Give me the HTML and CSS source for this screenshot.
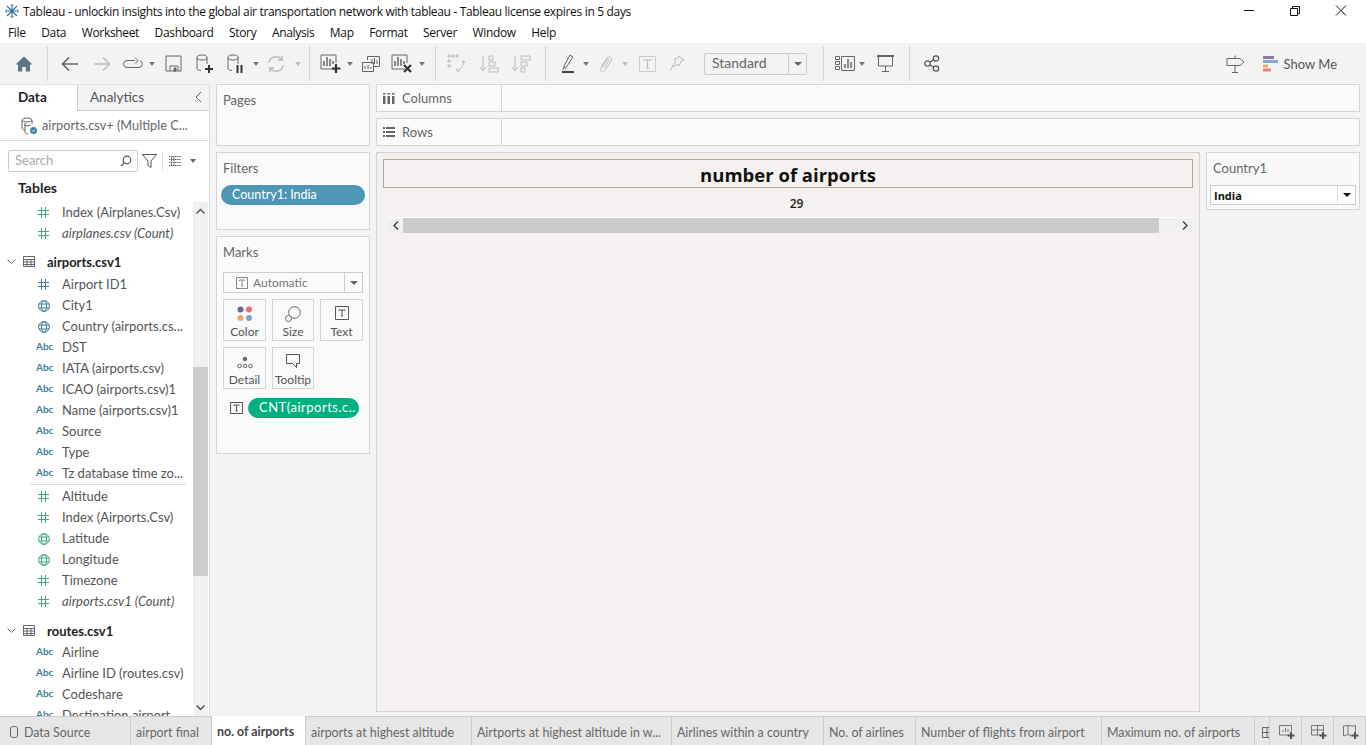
FILE: index.html
```html
<!DOCTYPE html>
<html>
<head>
	<meta charset="utf-8">
	<title>Tableau</title>
	<link rel="stylesheet" href="styles.css">
</head>
<body>
	<!-- title bar -->
	<div class="titlebar">
		<svg class="logo" width="16" height="16" viewBox="0 0 16 16" fill="none" stroke="#2d6f9e" stroke-width="1.100">
			<path d="M8 1v14M1 8h14M3 3l10 10M13 3L3 13"/>
			<path d="M6 2.500h4M6 13.500h4M2.500 6v4M13.500 6v4" stroke="#7fa8c4"/>
		</svg>
		<span class="titletext">Tableau - unlockin insights into the global air transportation network with tableau - Tableau license expires in 5 days</span>
		<div class="winbtns">
			<div class="winbtn"><svg width="12" height="12" viewBox="0 0 12 12" fill="none" stroke="#111"><path d="M1 5.500h10"/></svg></div>
			<div class="winbtn"><svg width="12" height="12" viewBox="0 0 12 12" fill="none" stroke="#111"><path d="M1.500 3.500h7v7h-7zM3.500 3.500v-2h7v7h-2"/></svg></div>
			<div class="winbtn"><svg width="12" height="12" viewBox="0 0 12 12" fill="none" stroke="#111"><path d="M1 .5l10 10M11 .5l-10 10"/></svg></div>
		</div>
	</div>
	<div class="menubar">
		<span>File</span><span>Data</span><span>Worksheet</span><span>Dashboard</span><span>Story</span><span>Analysis</span><span>Map</span><span>Format</span><span>Server</span><span>Window</span><span>Help</span>
	</div>

	<!-- toolbar -->
	<div class="toolbar">
		<div class="group g-home">
			<svg width="18" height="18" viewBox="0 0 18 18" fill="#5f7388"><path d="M9 1.500L.5 9.500h2.500v7h4.200v-4.500h3.600v4.500h4.200v-7h2.500z"/></svg>
		</div>
		<div class="group g-hist">
			<div class="cell w28"><svg width="18" height="16" viewBox="0 0 18 16" fill="none" stroke="#666" stroke-width="1.600"><path d="M17 8H2M8 1.500L1.500 8 8 14.500"/></svg></div>
			<div class="cell w36"><svg width="18" height="16" viewBox="0 0 18 16" fill="none" stroke="#bbb" stroke-width="1.600"><path d="M1 8h15M10 1.500L16.500 8 10 14.500"/></svg></div>
			<div class="cell w26"><svg width="20" height="14" viewBox="0 0 20 14" fill="none" stroke="#666"><path d="M12 3.500H4a3.500 3.500 0 0 0 0 7h12a3.500 3.500 0 0 0 1-6.800"/><path d="M12 .5l3 3-3 3"/></svg></div>
			<div class="drop"></div>
			<div class="cell w30"><svg width="17" height="17" viewBox="0 0 17 17" fill="none" stroke="#666"><path d="M1 1h15v15H1zM5 16v-5h8v5"/><path d="M9 13h2v3H9z" fill="#666"/></svg></div>
			<div class="cell w34"><svg width="20" height="20" viewBox="0 0 20 20" fill="none" stroke="#666"><ellipse cx="7" cy="3.500" rx="5" ry="2.500"/><path d="M2 3.500v11c0 1 1.500 2 4 2M12 3.500V10"/><path d="M14 11v8M10 15h8" stroke="#333" stroke-width="2"/></svg></div>
			<div class="cell w28"><svg width="20" height="20" viewBox="0 0 20 20" fill="none" stroke="#666"><ellipse cx="7" cy="3.500" rx="5" ry="2.500"/><path d="M2 3.500v11c0 1 1.500 2 4 2M12 3.500V10"/><path d="M11.500 11v8M15.500 11v8" stroke="#333" stroke-width="2"/></svg></div>
			<div class="drop"></div>
			<div class="cell w28"><svg width="18" height="18" viewBox="0 0 18 18" fill="none" stroke="#bbb" stroke-width="1.400"><path d="M2 8a7 7 0 0 1 12.500-3.500M16 10a7 7 0 0 1-12.500 3.500M15 1v4h-4M3 17v-4h4"/></svg></div>
			<div class="drop off pushed"></div>
		</div>
		<div class="group g-sheet">
			<div class="cell w26"><svg width="22" height="20" viewBox="0 0 22 20" fill="none" stroke="#666"><path d="M15 15H1V1h15v8"/><path d="M4 12V7M7 12V3M10 12V5M13 10V7" stroke-width="1.500"/><path d="M16 10v9M12 14.500h8.500" stroke="#333" stroke-width="2.200"/></svg></div>
			<div class="drop"></div>
			<div class="cell w30"><svg width="18" height="16" viewBox="0 0 18 16" fill="none" stroke="#666"><path d="M5.500 4V.5h12v10H12"/><path d="M.5 6.500h11v9H.5z" fill="#f3f3f3"/><path d="M10 8V3M12.500 8V2M15 8V4M3 13v-3M6 13v-4M9 13v-2"/></svg></div>
			<div class="cell w32"><svg width="22" height="20" viewBox="0 0 22 20" fill="none" stroke="#666"><path d="M14 15H1V1h15v8"/><path d="M4 12V7M7 12V3M10 12V5M13 10V7" stroke-width="1.500"/><path d="M13 11l7 7M20 11l-7 7" stroke="#333" stroke-width="2.200"/></svg></div>
			<div class="drop small"></div>
		</div>
		<div class="group g-sort">
			<div class="cell w26"><svg width="20" height="20" viewBox="0 0 20 20" fill="none" stroke="#bbb"><path d="M1 1h2v2H1zM5 1h2v2H5zM9 1h2v2H9zM1 6h2v2H1zM1 11h2v2H1zM16 7c1 4-1 8-6 10M10 14v3h3M15 9l1.500-2.500L18 9"/></svg></div>
			<div class="cell w38"><svg width="20" height="18" viewBox="0 0 20 18" fill="none" stroke="#bbb"><path d="M4 1v14M1 12l3 4 3-4"/><path d="M10 1h4v4h-4zM10 7h6v4h-6zM10 13h9v4h-9z"/></svg></div>
			<div class="cell w26"><svg width="20" height="18" viewBox="0 0 20 18" fill="none" stroke="#bbb"><path d="M4 1v14M1 12l3 4 3-4"/><path d="M10 1h9v4h-9zM10 7h6v4h-6zM10 13h4v4h-4z"/></svg></div>
		</div>
		<div class="group g-view">
			<div class="cell w24"><svg width="14" height="19" viewBox="0 0 14 19" fill="none" stroke="#666"><path d="M3 12l1.500 2.500L12 3 9 1zM3 12l-1 3.500"/><path d="M1 18h12" stroke="#444" stroke-width="2"/></svg></div>
			<div class="drop"></div>
			<div class="cell w27"><svg width="14" height="18" viewBox="0 0 14 18" fill="none" stroke="#bbb"><path d="M2 12l6-9c1.500-2.500 6-.5 4.500 2.500l-7 10.500c-1.500 2-5 0-3.500-2.500l6-9c.8-1 2.500-.2 1.800 1L5 13"/></svg></div>
			<div class="drop off"></div>
			<div class="cell w32"><svg width="17" height="16" viewBox="0 0 17 16" fill="none" stroke="#bbb"><path d="M.5.5h16v15H.5z" stroke-dasharray="2 1"/><path d="M5 5V4h7v1M8.500 4v8M7 12h3"/></svg></div>
			<div class="cell w28"><svg width="16" height="17" viewBox="0 0 16 17" fill="none" stroke="#bbb"><path d="M10 1l5 4-3 1-2 5-1.500-1.500L3 12l4-6-2-2 4-1zM3 12l-2 4"/></svg></div>
			<div class="fitbox"><span class="fittext">Standard</span><span class="fitarrow"><i class="tri"></i></span></div>
		</div>
		<div class="group g-show">
			<div class="cell w26"><svg width="20" height="15" viewBox="0 0 20 15" fill="none" stroke="#666"><path d="M.5.5h4v3h-4zM.5 5.500h4v3h-4zM.5 10.500h4v3h-4zM6.500.5h13v14h-13z"/><path d="M10 12V8M13 12V3M16 12V6" stroke-width="1.500"/></svg></div>
			<div class="drop small"></div>
			<div class="cell w38"><svg width="17" height="17" viewBox="0 0 17 17" fill="none" stroke="#666"><path d="M0 1h17" stroke-width="2"/><path d="M1.500 1v10h14V1M8.500 11v5M5 16.500h7"/></svg></div>
		</div>
		<div class="group g-share">
			<div class="cell w28"><svg width="16" height="17" viewBox="0 0 16 17" fill="none" stroke="#555" stroke-width="1.200"><circle cx="3.500" cy="8.500" r="2.700"/><circle cx="12" cy="3.500" r="2.700"/><circle cx="12" cy="13.500" r="2.700"/><path d="M6 7l3.700-2.200M6 10l3.700 2.200"/></svg></div>
		</div>
		<div class="tb-right">
			<svg width="19" height="18" viewBox="0 0 19 18" fill="none" stroke="#666"><path d="M1 3.500h13l4 3.500-4 3.500H1zM9 .5v3M9 10.500v7M6 17.500h6"/></svg>
			<div class="showme">
				<svg width="15" height="16" viewBox="0 0 15 16"><path d="M0 0h11v3H0z" fill="#8a76a0"/><path d="M0 4h15v3H0z" fill="#86a6cf"/><path d="M0 8.500h5v3H0z" fill="#f2a76f"/><path d="M0 12.500h8v3H0z" fill="#f47a80"/></svg>
				<span>Show Me</span>
			</div>
		</div>
	</div>

	<div class="main">
		<!-- data pane -->
		<div class="datapane">
			<div class="panetabs">
				<div class="panetab on">Data</div>
				<div class="panetab">Analytics<svg class="collapse" width="8" height="12" viewBox="0 0 8 12" fill="none" stroke="#666"><path d="M7 1L2 6l5 5"/></svg></div>
			</div>
			<div class="dsrow">
				<svg width="18" height="18" viewBox="0 0 18 18" fill="none" stroke="#666"><ellipse cx="7" cy="3" rx="5" ry="2"/><path d="M2 3v8c0 1 1 2 3 2M12 3v4M4 8c2 1 5 1 7 0M5 6v9c0 1 1 2 3 2"/><circle cx="13.500" cy="13.500" r="3.500" fill="#3d84a8" stroke="none"/><path d="M12 13.500l1 1 2-2" stroke="#fff"/></svg>
				<span>airports.csv+ (Multiple C...</span>
			</div>
			<div class="searchrow">
				<div class="searchbox">
					<span>Search</span>
					<svg width="12" height="12" viewBox="0 0 12 12" fill="none" stroke="#555" stroke-width="1.200"><circle cx="7" cy="5" r="3.800"/><path d="M4.300 7.700L1 11"/></svg>
				</div>
				<svg class="funnel" width="15" height="14" viewBox="0 0 15 14" fill="none" stroke="#555"><path d="M.5.5h14L9 7v6.500L6 11.500V7z"/></svg>
				<div class="sr-sep"></div>
				<svg class="gridicon" width="12" height="10" viewBox="0 0 12 10" fill="none" stroke="#666"><path d="M0 .5h12M0 3.500h12M0 6.500h12M0 9.500h12M2.500 0v10M5 0v10" stroke-dasharray="1.500 .5"/></svg>
				<i class="tri gridtri"></i>
			</div>
			<div class="tables-h">Tables</div>
			<div class="listwrap">
				<div class="fieldlist">
					<div class="row"><svg class="hash green" width="11" height="11" viewBox="0 0 11 11"><path d="M3.500 0v11M7.500 0v11M0 3.500h11M0 7.500h11"/></svg>Index (Airplanes.Csv)</div>
					<div class="row it"><svg class="hash green" width="11" height="11" viewBox="0 0 11 11"><path d="M3.500 0v11M7.500 0v11M0 3.500h11M0 7.500h11"/></svg>airplanes.csv (Count)</div>

					<div class="tbl">
						<svg class="chev" width="9" height="6" viewBox="0 0 9 6" fill="none" stroke="#777"><path d="M.5.5l4 4 4-4"/></svg>
						<svg class="tblic" width="12" height="11" viewBox="0 0 12 11" fill="none" stroke="#666"><path d="M.5.5h11v10H.5zM.5 3.500h11M.5 6h11M.5 8.500h11M4 3.500v7M8 3.500v7"/></svg>
						airports.csv1
					</div>
					<div class="row"><svg class="hash blue" width="11" height="11" viewBox="0 0 11 11"><path d="M3.500 0v11M7.500 0v11M0 3.500h11M0 7.500h11"/></svg>Airport ID1</div>
					<div class="row"><svg class="globe" width="12" height="12" viewBox="0 0 12 12" fill="none" stroke="#3d7f9c"><circle cx="6" cy="6" r="5.400"/><ellipse cx="6" cy="6" rx="2.500" ry="5.400"/><path d="M1 4h10M1 8h10"/></svg>City1</div>
					<div class="row"><svg class="globe" width="12" height="12" viewBox="0 0 12 12" fill="none" stroke="#3d7f9c"><circle cx="6" cy="6" r="5.400"/><ellipse cx="6" cy="6" rx="2.500" ry="5.400"/><path d="M1 4h10M1 8h10"/></svg>Country (airports.cs...</div>
					<div class="row"><span class="abc">Abc</span>DST</div>
					<div class="row"><span class="abc">Abc</span>IATA (airports.csv)</div>
					<div class="row"><span class="abc">Abc</span>ICAO (airports.csv)1</div>
					<div class="row"><span class="abc">Abc</span>Name (airports.csv)1</div>
					<div class="row"><span class="abc">Abc</span>Source</div>
					<div class="row"><span class="abc">Abc</span>Type</div>
					<div class="row"><span class="abc">Abc</span>Tz database time zo...</div>
					<div class="rule"></div>
					<div class="row"><svg class="hash green" width="11" height="11" viewBox="0 0 11 11"><path d="M3.500 0v11M7.500 0v11M0 3.500h11M0 7.500h11"/></svg>Altitude</div>
					<div class="row"><svg class="hash green" width="11" height="11" viewBox="0 0 11 11"><path d="M3.500 0v11M7.500 0v11M0 3.500h11M0 7.500h11"/></svg>Index (Airports.Csv)</div>
					<div class="row"><svg class="globe" width="12" height="12" viewBox="0 0 12 12" fill="none" stroke="#3fa67f"><circle cx="6" cy="6" r="5.400"/><ellipse cx="6" cy="6" rx="2.500" ry="5.400"/><path d="M1 4h10M1 8h10"/></svg>Latitude</div>
					<div class="row"><svg class="globe" width="12" height="12" viewBox="0 0 12 12" fill="none" stroke="#3fa67f"><circle cx="6" cy="6" r="5.400"/><ellipse cx="6" cy="6" rx="2.500" ry="5.400"/><path d="M1 4h10M1 8h10"/></svg>Longitude</div>
					<div class="row"><svg class="hash green" width="11" height="11" viewBox="0 0 11 11"><path d="M3.500 0v11M7.500 0v11M0 3.500h11M0 7.500h11"/></svg>Timezone</div>
					<div class="row it"><svg class="hash green" width="11" height="11" viewBox="0 0 11 11"><path d="M3.500 0v11M7.500 0v11M0 3.500h11M0 7.500h11"/></svg>airports.csv1 (Count)</div>

					<div class="tbl last">
						<svg class="chev" width="9" height="6" viewBox="0 0 9 6" fill="none" stroke="#777"><path d="M.5.5l4 4 4-4"/></svg>
						<svg class="tblic" width="12" height="11" viewBox="0 0 12 11" fill="none" stroke="#666"><path d="M.5.5h11v10H.5zM.5 3.500h11M.5 6h11M.5 8.500h11M4 3.500v7M8 3.500v7"/></svg>
						routes.csv1
					</div>
					<div class="row"><span class="abc">Abc</span>Airline</div>
					<div class="row"><span class="abc">Abc</span>Airline ID (routes.csv)</div>
					<div class="row"><span class="abc">Abc</span>Codeshare</div>
					<div class="row"><span class="abc">Abc</span>Destination airport</div>
				</div>
				<div class="vscroll">
					<div class="vs-btn"><svg width="9" height="6" viewBox="0 0 9 6" fill="none" stroke="#555" stroke-width="1.500"><path d="M.5 5.500l4-4 4 4"/></svg></div>
					<div class="vs-track"><div class="vs-thumb"></div></div>
					<div class="vs-btn"><svg width="9" height="6" viewBox="0 0 9 6" fill="none" stroke="#555" stroke-width="1.500"><path d="M.5.5l4 4 4-4"/></svg></div>
				</div>
			</div>
		</div>

		<!-- shelves -->
		<div class="cards">
			<div class="card pages"><div class="cardtitle">Pages</div></div>
			<div class="card filters">
				<div class="cardtitle">Filters</div>
				<div class="pill bluepill">Country1: India</div>
			</div>
			<div class="card marks">
				<div class="cardtitle">Marks</div>
				<div class="marktype">
					<svg width="12" height="12" viewBox="0 0 12 12" fill="none" stroke="#888"><path d="M.5.5h11v11H.5z"/><path d="M3.500 4V3h5v1M6 3v6M5 9h2"/></svg>
					<span>Automatic</span>
					<span class="mt-arrow"><i class="tri"></i></span>
				</div>
				<div class="markgrid">
					<div class="markbtn"><svg width="16" height="16" viewBox="0 0 16 16"><circle cx="3.500" cy="3.500" r="3" fill="#7b5f92"/><circle cx="12" cy="3.500" r="3" fill="#ef6b75"/><circle cx="3.500" cy="12" r="3" fill="#f0a26a"/><circle cx="12" cy="12" r="3" fill="#7ea3cc"/></svg><span>Color</span></div>
					<div class="markbtn"><svg width="16" height="16" viewBox="0 0 16 16" fill="none" stroke="#666"><circle cx="9.500" cy="6.500" r="5.800"/><circle cx="3.500" cy="12.500" r="3" fill="#fafafa"/></svg><span>Size</span></div>
					<div class="markbtn"><svg width="14" height="14" viewBox="0 0 14 14" fill="none" stroke="#555"><path d="M.5.5h13v13H.5z"/><path d="M4 5V4h6v1M7 4v6M6 10h2"/></svg><span>Text</span></div>
					<div class="markbtn"><svg width="16" height="16" viewBox="0 0 16 16" fill="none" stroke="#666"><circle cx="8" cy="5" r="1.800" fill="#666"/><circle cx="2.500" cy="12" r="1.800"/><circle cx="8" cy="12" r="1.800"/><circle cx="13.500" cy="12" r="1.800"/></svg><span>Detail</span></div>
					<div class="markbtn"><svg width="14" height="14" viewBox="0 0 14 14" fill="none" stroke="#555"><path d="M.5.5h13v9h-3v4l-4-4H.5z"/></svg><span>Tooltip</span></div>
				</div>
				<div class="markpill">
					<svg width="13" height="12" viewBox="0 0 13 12" fill="none" stroke="#555"><path d="M.5.5h12v11H.5z"/><path d="M4 4V3h5v1M6.500 3v6M5.500 9h2"/></svg>
					<div class="pill greenpill">CNT(airports.c..</div>
				</div>
			</div>
		</div>

		<!-- view -->
		<div class="viewcol">
			<div class="shelf">
				<div class="shelflabel"><svg width="12" height="11" viewBox="0 0 12 11" fill="#666"><path d="M0 3h2.500v8H0zM4.500 3H7v8H4.500zM9 3h2.500v8H9zM0 0h2.500v1.500H0zM4.500 0H7v1.500H4.500zM9 0h2.500v1.500H9z"/></svg>Columns</div>
			</div>
			<div class="shelf">
				<div class="shelflabel"><svg width="12" height="10" viewBox="0 0 12 10" fill="#666"><path d="M3 0h9v2H3zM3 4h9v2H3zM3 8h9v2H3zM0 0h2v2H0zM0 4h2v2H0zM0 8h2v2H0z"/></svg>Rows</div>
			</div>
			<div class="viewrow">
				<div class="sheet">
					<div class="sheettitle">number of airports</div>
					<div class="sheetvalue">29</div>
					<div class="hscroll">
						<div class="hs-btn"><svg width="6" height="9" viewBox="0 0 6 9" fill="none" stroke="#444" stroke-width="1.500"><path d="M5 .5l-4 4 4 4"/></svg></div>
						<div class="hs-thumb"></div>
						<div class="hs-btn hs-right"><svg width="6" height="9" viewBox="0 0 6 9" fill="none" stroke="#444" stroke-width="1.500"><path d="M1 .5l4 4-4 4"/></svg></div>
					</div>
				</div>
				<div class="legend">
					<div class="cardtitle">Country1</div>
					<div class="legendsel"><span>India</span><span class="ls-arrow"><i class="tri black"></i></span></div>
				</div>
			</div>
		</div>
	</div>

	<!-- sheet tabs -->
	<div class="tabbar">
		<div class="tab t1"><svg width="8" height="12" viewBox="0 0 8 12" fill="none" stroke="#666"><path d="M.5 2c0-2 7-2 7 0v8c0 2-7 2-7 0z"/></svg>Data Source</div>
		<div class="tab t2">airport final</div>
		<div class="tab t3 active">no. of airports</div>
		<div class="tab t4">airports at highest altitude</div>
		<div class="tab t5">Airtports at highest altitude in w...</div>
		<div class="tab t6">Airlines within a country</div>
		<div class="tab t7">No. of airlines</div>
		<div class="tab t8">Number of flights from airport</div>
		<div class="tab t9">Maximum no. of airports</div>
		<div class="tab t10"><svg width="8" height="11" viewBox="0 0 8 11" fill="none" stroke="#666"><path d="M8 .5H.5v10H8M.5 5.500H8M5 .5v10"/></svg></div>
		<div class="tab t11"><svg width="16" height="15" viewBox="0 0 16 15" fill="none" stroke="#777"><path d="M10 10H.5V.5h12v6"/><path d="M4 7V5M6.500 7V3M9 7V4"/><path d="M12 7v7M8.500 10.500h7" stroke="#555" stroke-width="2"/></svg></div>
		<div class="tab t11"><svg width="16" height="15" viewBox="0 0 16 15" fill="none" stroke="#777"><path d="M10 10H.5V.5h12v6M.5 5h12M6.500.5V10"/><path d="M12 7v7M8.500 10.500h7" stroke="#555" stroke-width="2"/></svg></div>
		<div class="tab t11"><svg width="16" height="15" viewBox="0 0 16 15" fill="none" stroke="#777"><path d="M9 11l-4-1.500L.5 11V1L5 .5 10 1l2.500-.5V7M5 .5v9"/><path d="M12 7v7M8.500 10.500h7" stroke="#555" stroke-width="2"/></svg></div>
	</div>
</body>
</html>
```

FILE: styles.css
```css
*{
	box-sizing: border-box;
	margin: 0;
	padding: 0;
}
html,body{
	height: 100%;
	overflow: hidden;
}
body{
	width: 1366px;
	height: 745px;
	display: flex;
	flex-direction: column;
	font-family: Lato, "Open Sans", "Liberation Sans", sans-serif;
	font-size: 13px;
	color: #555;
	background: #f3f3f3;
}
svg{
	display: block;
	flex: none;
}

/* title + menu */
.titlebar{
	height: 22px;
	display: flex;
	align-items: center;
	background: #fff;
	padding-left: 4px;
}
.logo{
	margin-right: 3px;
}
.titletext{
	font-family: "Open Sans", sans-serif;
	font-size: 12px;
	letter-spacing: -0.33px;
	color: #111;
	white-space: nowrap;
}
.winbtns{
	margin-left: auto;
	padding-right: 2px;
	display: flex;
}
.winbtn{
	width: 46px;
	height: 22px;
	display: flex;
	align-items: center;
	justify-content: center;
}
.menubar{
	height: 21px;
	display: flex;
	align-items: center;
	background: #fff;
	padding-left: 8px;
	gap: 15.500px;
	font-family: "Open Sans", sans-serif;
	font-size: 12px;
	letter-spacing: -0.33px;
	color: #111;
}

/* toolbar */
.toolbar{
	height: 41px;
	display: flex;
	align-items: center;
	background: #f3f3f3;
	flex: none;
}
.group{
	height: 35px;
	display: flex;
	align-items: center;
	padding-left: 8px;
	border-right: 1px solid #d4d4d4;
	flex: none;
}
.g-home{
	width: 48px;
	padding-left: 15px;
}
.g-hist{
	width: 262px;
}
.g-sheet{
	width: 126px;
}
.g-sort{
	width: 110px;
}
.g-view{
	width: 278px;
	padding-left: 10px;
}
.g-show{
	width: 86px;
}
.g-share{
	border-right: 0;
}
.cell{
	height: 24px;
	display: flex;
	align-items: center;
	justify-content: center;
	flex: none;
}
.w24{ width: 24px; }
.w26{ width: 26px; }
.w27{ width: 27px; }
.w28{ width: 28px; }
.w30{ width: 30px; }
.w32{ width: 32px; }
.w34{ width: 34px; }
.w36{ width: 36px; }
.w38{ width: 38px; }
.tri{
	display: block;
	width: 0;
	height: 0;
	border-left: 4px solid transparent;
	border-right: 4px solid transparent;
	border-top: 4px solid #666;
}
.tri.black{
	border-top-color: #111;
}
.drop{
	width: 12px;
	height: 24px;
	position: relative;
	flex: none;
}
.drop::after{
	content: "";
	position: absolute;
	left: 3px;
	top: 10px;
	border-left: 3.500px solid transparent;
	border-right: 3.500px solid transparent;
	border-top: 4px solid #777;
}
.drop.off::after{
	border-top-color: #bbb;
}
.drop.small{
	width: 8px;
}
.drop.small::after{
	left: 1px;
}
.pushed{
	margin-left: 2px;
}
.fitbox{
	width: 103px;
	height: 22px;
	margin-left: 13px;
	display: flex;
	align-items: center;
	border: 1px solid #ccc;
	border-radius: 2px;
	font-size: 14px;
	color: #666;
	flex: none;
}
.fittext{
	flex: 1;
	padding: 0 0 2px 7px;
}
.fitarrow{
	width: 18px;
	height: 100%;
	border-left: 1px solid #ccc;
	display: flex;
	align-items: center;
	justify-content: center;
}
.tb-right{
	margin-left: auto;
	padding-right: 29px;
	display: flex;
	align-items: center;
	gap: 18px;
}
.showme{
	display: flex;
	align-items: center;
	gap: 6px;
	font-size: 13px;
	color: #555;
}

/* main area */
.main{
	flex: 1;
	min-height: 0;
	display: flex;
}

/* data pane */
.datapane{
	width: 210px;
	flex: none;
	display: flex;
	flex-direction: column;
	background: #fff;
	border-right: 1px solid #ddd;
}
.panetabs{
	height: 27px;
	display: flex;
	flex: none;
}
.panetab{
	flex: 1;
	display: flex;
	align-items: center;
	padding: 0 0 2px 12px;
	font-size: 13.500px;
	color: #555;
	background: #f3f3f3;
	border-bottom: 1px solid #ccc;
	border-top: 1px solid #e4e4e4;
	position: relative;
}
.panetab.on{
	flex: 0 0 78px;
	padding-left: 18px;
	background: #fff;
	border-bottom: 0;
	border-right: 1px solid #ccc;
	font-weight: 700;
	color: #222;
}
.collapse{
	position: absolute;
	right: 7px;
	top: 6px;
}
.dsrow{
	height: 30px;
	display: flex;
	align-items: center;
	gap: 4px;
	padding-left: 20px;
	border-bottom: 1px solid #ddd;
	flex: none;
	font-size: 12.750px;
	color: #666;
}
.dsrow span{
	padding-bottom: 2px;
}
.searchrow{
	height: 22px;
	margin-top: 9px;
	padding-left: 8px;
	display: flex;
	align-items: center;
	flex: none;
}
.searchbox{
	width: 130px;
	height: 22px;
	border: 1px solid #ccc;
	border-radius: 2px;
	display: flex;
	align-items: center;
	justify-content: space-between;
	padding: 0 5px 0 6px;
	color: #aaa;
}
.searchbox span{
	padding-bottom: 2px;
}
.funnel{
	margin-left: 4px;
}
.sr-sep{
	width: 1px;
	height: 18px;
	background: #ddd;
	margin: 0 6px 0 5px;
}
.gridtri{
	margin-left: 9px;
	border-left-width: 3.500px;
	border-right-width: 3.500px;
}
.tables-h{
	height: 22px;
	margin-top: 6px;
	padding-left: 18px;
	font-size: 14px;
	font-weight: 700;
	color: #222;
	line-height: 20px;
	flex: none;
}
.listwrap{
	flex: 1;
	min-height: 0;
	display: flex;
	margin-top: 2px;
}
.fieldlist{
	flex: 1;
	min-width: 0;
	overflow: hidden;
}
.row{
	height: 21px;
	display: flex;
	align-items: center;
	padding: 0 0 2px 62px;
	position: relative;
	white-space: nowrap;
}
.row.it{
	font-style: italic;
}
.hash{
	position: absolute;
	left: 38px;
	top: 5px;
	fill: none;
	stroke: currentColor;
}
.green{
	color: #3fa67f;
}
.blue{
	color: #3d7f9c;
}
.globe{
	position: absolute;
	left: 38px;
	top: 5px;
}
.abc{
	position: absolute;
	left: 36px;
	top: 3px;
	font-size: 10px;
	font-weight: 700;
	color: #3d7f9c;
}
.tbl{
	height: 21px;
	margin-top: 8px;
	margin-bottom: 1px;
	padding-bottom: 2px;
	display: flex;
	align-items: center;
	font-weight: 700;
	color: #222;
}
.tbl.last{
	margin-top: 9px;
	margin-bottom: 0;
}
.chev{
	margin-left: 7px;
}
.tblic{
	margin: 0 12px 0 7px;
}
.rule{
	height: 1px;
	margin: 0 7px 1px 30px;
	background: #ddd;
}
.vscroll{
	width: 15px;
	margin-right: 1px;
	display: flex;
	flex-direction: column;
	background: #f0f0f0;
	flex: none;
}
.vs-btn{
	height: 17px;
	display: flex;
	align-items: center;
	justify-content: center;
	flex: none;
}
.vs-track{
	flex: 1;
	padding-top: 148px;
	padding-bottom: 123px;
	display: flex;
}
.vs-thumb{
	flex: 1;
	background: #cdcdcd;
}

/* cards */
.cards{
	width: 160px;
	margin-left: 6px;
	flex: none;
}
.card{
	width: 154px;
	background: #fafafa;
	border: 1px solid #d4d4d4;
	margin-bottom: 6px;
}
.cardtitle{
	padding: 7px 0 0 6px;
	line-height: 17px;
	color: #666;
}
.pages{
	height: 62px;
	margin-top: 0;
}
.filters{
	height: 78px;
}
.pill{
	height: 20px;
	border-radius: 10px;
	color: #fff;
	line-height: 19px;
}
.bluepill{
	margin: 8px 4px 0;
	padding-left: 11px;
	background: #4d96b5;
	font-size: 12.500px;
}
.marks{
	height: 218px;
}
.marktype{
	height: 21px;
	margin: 11px 6px 0;
	display: flex;
	align-items: center;
	border: 1px solid #ccc;
	padding-left: 12px;
	gap: 5px;
	color: #777;
	font-size: 12px;
}
.mt-arrow{
	margin-left: auto;
	width: 18px;
	height: 100%;
	border-left: 1px solid #ccc;
	display: flex;
	align-items: center;
	justify-content: center;
}
.markgrid{
	margin: 6px 6px 0;
	display: grid;
	grid-template-columns: 43px 42px 43px;
	grid-auto-rows: 42px;
	gap: 6px 6px;
}
.markbtn{
	border: 1px solid #d4d4d4;
	display: flex;
	flex-direction: column;
	align-items: center;
	font-size: 12px;
	color: #555;
	padding: 6px 0 1px;
	height: 42px;
	justify-content: space-between;
}
.markpill{
	margin: 9px 0 0 13px;
	display: flex;
	align-items: center;
	gap: 5px;
}
.greenpill{
	width: 111px;
	padding-left: 11px;
	background: #00b180;
	letter-spacing: 0.5px;
	white-space: nowrap;
}

/* view */
.viewcol{
	flex: 1;
	min-width: 0;
	padding-right: 6px;
}
.shelf{
	height: 28px;
	margin-bottom: 6px;
	background: #fafafa;
	border: 1px solid #d4d4d4;
}
.shelflabel{
	width: 125px;
	height: 100%;
	display: flex;
	align-items: center;
	gap: 7px;
	padding-left: 6px;
	border-right: 1px solid #d4d4d4;
	color: #666;
}
.viewrow{
	display: flex;
	gap: 6px;
}
.sheet{
	width: 824px;
	height: 560px;
	background: #f4f1f0;
	border: 1px solid #d4d4d4;
	padding: 6px 6px 0;
	margin-left: 0;
}
.sheettitle{
	height: 29px;
	border: 1px solid #b0a898;
	text-align: center;
	font-family: "Open Sans", sans-serif;
	font-size: 18.500px;
	font-weight: 700;
	line-height: 29px;
	color: #111;
}
.sheetvalue{
	height: 29px;
	padding-left: 17px;
	text-align: center;
	line-height: 31px;
	font-family: "Open Sans", sans-serif;
	font-size: 12px;
	font-weight: 600;
	color: #222;
}
.hscroll{
	height: 16px;
	margin: 0 1px 0 5px;
	display: flex;
	border-top: 1px solid #fff;
	background: #f0f0f0;
}
.hs-btn{
	width: 15px;
	display: flex;
	align-items: center;
	justify-content: center;
	flex: none;
}
.hs-thumb{
	width: 756px;
	background: #cbcbcb;
}
.hs-right{
	margin-left: auto;
}
.legend{
	width: 154px;
	height: 58px;
	background: #f9f9f9;
	border: 1px solid #d4d4d4;
}
.legendsel{
	height: 20px;
	margin: 8px 3px 0;
	display: flex;
	align-items: center;
	background: #fff;
	border: 1px solid #ccc;
	font-family: "Open Sans", sans-serif;
	font-size: 11px;
	font-weight: 700;
	color: #111;
	padding-left: 3px;
}
.ls-arrow{
	margin-left: auto;
	width: 18px;
	height: 100%;
	border-left: 1px solid #ddd;
	display: flex;
	align-items: center;
	justify-content: center;
}

/* bottom tabs */
.tabbar{
	height: 29px;
	display: flex;
	flex: none;
	background: #e6e6e6;
	border-top: 1px solid #ccc;
}
.tab{
	height: 100%;
	display: flex;
	align-items: center;
	padding: 2px 0 0 5px;
	border-right: 1px solid #ccc;
	font-size: 12.400px;
	white-space: nowrap;
	overflow: hidden;
	color: #666;
	flex: none;
}
.tab.active{
	background: #fff;
	font-weight: 700;
	color: #444;
	margin-top: -1px;
	height: 29px;
}
.t1{ width: 131px; padding-left: 10px; gap: 6px; }
.t2{ width: 81px; }
.t3{ width: 94px; }
.t4{ width: 166px; }
.t5{ width: 200px; }
.t6{ width: 152px; }
.t7{ width: 92px; }
.t8{ width: 186px; }
.t9{ width: 153px; }
.t10{ width: 15px; padding-left: 7px; }
.t11{ width: 32px; padding-left: 9px; }
```
